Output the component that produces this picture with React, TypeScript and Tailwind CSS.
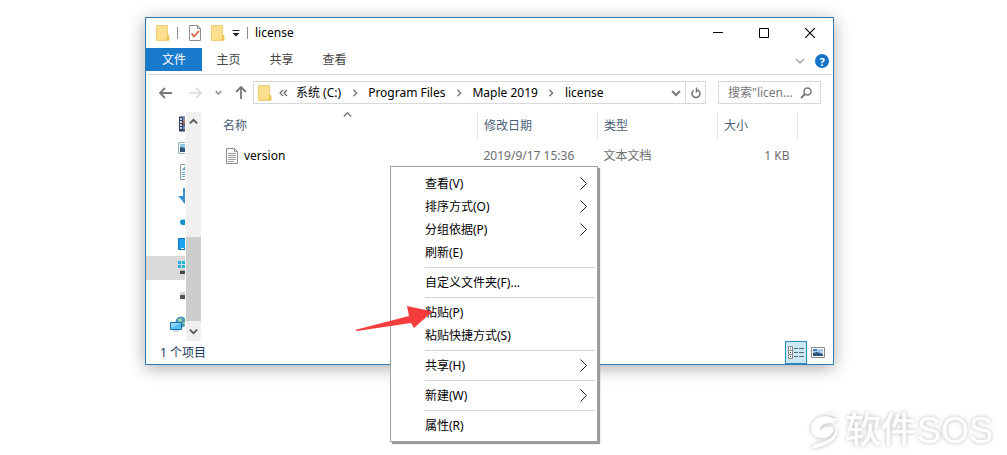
import React from 'react'

interface MenuEntry {
  label: string
  submenu?: boolean
}

const MENU_GROUPS: MenuEntry[][] = [
  [
    { label: '查看(V)', submenu: true },
    { label: '排序方式(O)', submenu: true },
    { label: '分组依据(P)', submenu: true },
    { label: '刷新(E)' },
  ],
  [{ label: '自定义文件夹(F)...' }],
  [{ label: '粘贴(P)' }, { label: '粘贴快捷方式(S)' }],
  [{ label: '共享(H)', submenu: true }],
  [{ label: '新建(W)', submenu: true }],
  [{ label: '属性(R)' }],
]

const PATH_PARTS = ['系统 (C:)', 'Program Files', 'Maple 2019', 'license']

function FolderIcon() {
  return (
    <svg width="14" height="16" viewBox="0 0 14 16" className="shrink-0">
      <path d="M0.5 0.5h11v10h1.5v5H0.5z" fill="#fbdf86" stroke="#efd07a" />
      <path d="M11 10h2v5H8l3-1z" fill="#eec45a" />
      <path d="M2 2h8v11H2z" fill="#fee090" />
    </svg>
  )
}

function Chevron({ dir, color = '#666', size = 8, weight = 1.5 }: { dir: 'up' | 'down' | 'right'; color?: string; size?: number; weight?: number }) {
  const paths = { up: 'M1 6l4-4 4 4', down: 'M1 3l4 4 4-4', right: 'M3 1l4 4-4 4' }
  return (
    <svg width={size} height={size} viewBox="0 0 10 10" className="shrink-0">
      <path d={paths[dir]} fill="none" stroke={color} strokeWidth={weight} />
    </svg>
  )
}

// Navigation pane icons, only their left half shows in the narrow pane
const NAV_ITEMS = [
  {
    name: '视频',
    icon: (
      <>
        <path d="M2 0.5h13v15H2z" fill="#35405c" />
        <path d="M3 2h2v2H3zM3 5h2v2H3zM3 8h2v2H3zM3 11h2v2H3z" fill="#cdd5e2" />
        <path d="M6 1h8v6H6z" fill="#7d90c4" />
        <path d="M6 5h4v3H6z" fill="#c8604a" />
        <path d="M6 9h8v5H6z" fill="#6c84b4" />
      </>
    ),
  },
  {
    name: '图片',
    icon: (
      <>
        <path d="M1.5 2.5h14v11h-14z" fill="#fff" stroke="#9db0bf" />
        <path d="M3 4h11v8H3z" fill="#8fc7ea" />
        <path d="M3 7l5 1 6-1v5H3z" fill="#2d5575" />
      </>
    ),
  },
  {
    name: '文档',
    icon: (
      <>
        <path d="M3.5 0.5h11v15h-11z" fill="#fff" stroke="#929ba3" />
        <path d="M5 6l3-4v4z" fill="#4c9fd4" />
        <path d="M5 8.5h8M5 10.5h8M5 12.5h8" stroke="#5aa4d2" />
      </>
    ),
  },
  { name: '下载', icon: <path d="M6 0h4v7h6l-8 9-7-8h5z" fill="#3a8fd0" /> },
  { name: 'OneDrive', icon: <path d="M6 13a2.500 2.500 0 0 1-0.500-5.500H14V13z" fill="#1790d2" /> },
  {
    name: '此电脑',
    icon: (
      <>
        <path d="M1.5 2.5h14v11h-14z" fill="#1da2f2" stroke="#126fae" />
        <path d="M4 12h3v1H4z" fill="#fff" />
      </>
    ),
  },
  {
    name: '系统 (C:)',
    active: true,
    icon: (
      <>
        <path d="M1 1h3v3H1zM5 1h3v3H5zM1 5h3v3H1zM5 5h3v3H5z" fill="#19b5dc" />
        <path d="M3 10h12v1H3z" fill="#aaa" />
        <path d="M3 11h12v3H3z" fill="#444" />
      </>
    ),
  },
  {
    name: '软件 (D:)',
    icon: (
      <>
        <path d="M4 8h10l1 3H3z" fill="#d2d2d2" />
        <path d="M3 11h12v4H3z" fill="#555" />
      </>
    ),
  },
]

function TextFileIcon() {
  return (
    <svg width="12" height="16" viewBox="0 0 12 16" className="shrink-0">
      <path d="M0.5 0.5h8l3 3v12h-11z" fill="#fff" stroke="#8a8a8a" />
      <path d="M8.5 0.5v3h3M2 5.5h8M2 7.5h8M2 9.5h8M2 11.5h8M2 13.5h6" fill="none" stroke="#9b9b9b" />
    </svg>
  )
}

function TitleBar() {
  return (
    <header className="flex h-[30px] items-center pl-[10px]">
      <FolderIcon />
      <span className="ml-[7px] h-3 w-px bg-[#8c8c8c]" />
      <button aria-label="属性" className="ml-[11px]">
        <svg width="12" height="16" viewBox="0 0 12 16">
          <path d="M0.5 0.5h8l3 3v12h-11z" fill="#fff" stroke="#8e8e8e" />
          <path d="M8.5 0.5v3h3" fill="none" stroke="#8e8e8e" />
          <path d="M2.5 8.5l2.500 3 5-5.500" fill="none" stroke="#d4643f" strokeWidth="1.8" />
        </svg>
      </button>
      <button aria-label="新建文件夹" className="ml-[10px]">
        <FolderIcon />
      </button>
      <button aria-label="自定义快速访问工具栏" className="ml-[7px]">
        <svg width="8" height="8" viewBox="0 0 8 8">
          <path d="M0.5 1h7v1h-7zM0.5 4h7L4 7.5z" fill="#222" />
        </svg>
      </button>
      <span className="ml-[7px] h-3 w-px bg-[#8c8c8c]" />
      <h1 className="ml-[7px] flex-1 text-black">license</h1>
      <button aria-label="最小化" className="flex h-full w-[46px] items-center justify-center">
        <svg width="10" height="10" viewBox="0 0 10 10">
          <path d="M0 4h10v1H0z" fill="#000" />
        </svg>
      </button>
      <button aria-label="最大化" className="flex h-full w-[46px] items-center justify-center">
        <svg width="10" height="10" viewBox="0 0 10 10">
          <path d="M0.5 0.5h9v9h-9z" fill="none" stroke="#000" />
        </svg>
      </button>
      <button aria-label="关闭" className="flex h-full w-[46px] items-center justify-center">
        <svg width="10" height="10" viewBox="0 0 10 10">
          <path d="M0 0l10 10M10 0L0 10" fill="none" stroke="#000" strokeWidth="1.1" />
        </svg>
      </button>
    </header>
  )
}

function RibbonTabs() {
  return (
    <nav className="flex h-[27px] items-start border-b border-[#dadbdc] text-[#444]">
      <button className="h-[23px] w-14 bg-[#1979ca] text-white">文件</button>
      <button className="h-[23px] w-[53px]">主页</button>
      <button className="h-[23px] w-[53px]">共享</button>
      <button className="h-[23px] w-[53px]">查看</button>
      <span className="flex-1" />
      <button aria-label="展开功能区" className="flex h-[26px] items-center">
        <Chevron dir="down" color="#a3a3a3" size={10} />
      </button>
      <button aria-label="帮助" className="mr-1 ml-[10px] flex h-[26px] items-center">
        <span className="flex h-[14px] w-[14px] items-center justify-center rounded-full bg-[#1473c5] text-[11px] leading-none font-bold text-white">
          ?
        </span>
      </button>
    </nav>
  )
}

function AddressRow() {
  return (
    <div className="flex items-center pt-[6px] pr-3 pb-2 pl-[13px]">
      <button aria-label="后退">
        <svg width="13" height="12" viewBox="0 0 13 12">
          <path d="M6 1L1 6l5 5M1 6h12" fill="none" stroke="#777" strokeWidth="1.8" />
        </svg>
      </button>
      <button aria-label="前进" className="ml-[17px]">
        <svg width="13" height="12" viewBox="0 0 13 12">
          <path d="M7 1l5 5-5 5M12 6H0" fill="none" stroke="#d8d8d8" strokeWidth="1.6" />
        </svg>
      </button>
      <button aria-label="最近浏览的位置" className="ml-[13px]">
        <Chevron dir="down" color="#888" size={7} weight={2} />
      </button>
      <button aria-label="上移" className="ml-[13px]">
        <svg width="12" height="13" viewBox="0 0 12 13">
          <path d="M1 6l5-5 5 5M6 1v12" fill="none" stroke="#777" strokeWidth="1.8" />
        </svg>
      </button>
      <div className="ml-[6px] flex h-[23px] min-w-0 flex-1 items-center border border-[#d9d9d9] pl-1 text-black">
        <FolderIcon />
        <svg width="9" height="8" viewBox="0 0 9 8" className="mr-2 ml-[7px] shrink-0">
          <path d="M4 1L1 4l3 3M8 1L5 4l3 3" fill="none" stroke="#666" strokeWidth="1.2" />
        </svg>
        {PATH_PARTS.map((part, i) => (
          <React.Fragment key={part}>
            {i > 0 && (
              <span className="flex w-[27px] shrink-0 justify-center">
                <Chevron dir="right" color="#777" weight={1.8} />
              </span>
            )}
            <a href="#" className="whitespace-nowrap">
              {part}
            </a>
          </React.Fragment>
        ))}
        <span className="flex-1" />
        <button aria-label="以前的位置" className="flex h-full w-[14px] items-center">
          <Chevron dir="down" color="#777" size={10} weight={2} />
        </button>
        <button aria-label="刷新" className="flex h-full w-5 items-center justify-center border-l border-[#d9d9d9]">
          <svg width="10" height="12" viewBox="0 0 10 12" className="shrink-0">
            <path d="M2.500 3.500A4 4 0 1 0 7.500 3.500H5" fill="none" stroke="#707070" strokeWidth="1.5" />
            <path d="M5.500 0.500v5" fill="none" stroke="#707070" strokeWidth="1.5" />
          </svg>
        </button>
      </div>
      <label className="ml-3 flex h-[23px] w-[103px] items-center border border-[#d9d9d9] pr-2 pl-[9px]">
        <input
          type="text"
          aria-label="搜索"
          placeholder={'搜索"licen...'}
          className="w-0 min-w-0 flex-1 bg-transparent outline-none placeholder:text-[#757575]"
        />
        <svg width="12" height="12" viewBox="0 0 12 12" className="shrink-0">
          <circle cx="7.500" cy="4.500" r="3.500" fill="none" stroke="#777" strokeWidth="1.5" />
          <path d="M5 7L1 11" stroke="#777" strokeWidth="2" />
        </svg>
      </label>
    </div>
  )
}

function NavPane() {
  return (
    <div className="flex shrink-0">
      <ul className="w-[39px] overflow-hidden pb-[5px]">
        {NAV_ITEMS.map((item) => (
          <li key={item.name} className={item.active ? 'bg-[#d9d9d9]' : ''}>
            <a href="#" aria-label={item.name} className="flex h-6 items-center pl-[31px]">
              <svg width="16" height="16" viewBox="0 0 16 16" className="shrink-0">
                {item.icon}
              </svg>
            </a>
          </li>
        ))}
        <li className="mt-2">
          <a href="#" aria-label="网络" className="flex h-6 items-center pl-6">
            <svg width="16" height="16" viewBox="0 0 16 16" className="shrink-0">
              <circle cx="11" cy="6" r="5.500" fill="#4b97bd" />
              <path d="M8 3l3-1 1 3-3 2zM12 7l3-1v3z" fill="#a9d4a4" />
              <path d="M0.5 6.500h11v7h-11z" fill="#55bdf3" stroke="#1d6ea6" />
              <path d="M1 7h10L1 12z" fill="#8dd6fb" />
              <path d="M3 15h6" stroke="#8ab8d2" />
            </svg>
          </a>
        </li>
      </ul>
      <div className="ml-px flex w-[15px] flex-col bg-[#f0f0f0]">
        <button aria-label="向上滚动" className="flex h-5 items-center justify-center">
          <Chevron dir="up" color="#555" size={9} weight={2} />
        </button>
        <div className="flex flex-1 flex-col justify-end">
          <div className="h-[84px] bg-[#cdcdcd]" />
        </div>
        <button aria-label="向下滚动" className="flex h-5 items-center justify-center">
          <Chevron dir="down" color="#555" size={9} weight={2} />
        </button>
      </div>
    </div>
  )
}

function FileTable() {
  return (
    <div className="min-w-0 flex-1 pr-[35px]">
      <table className="w-full table-fixed text-left text-[#6d6d6d]">
        <thead className="text-[#4c607a]">
          <tr className="h-[27px]">
            <th className="relative border-r border-[#e5e5e5] pl-[22px] font-normal">
              名称
              <span className="absolute -top-px left-[142px]">
                <Chevron dir="up" color="#777" size={9} />
              </span>
            </th>
            <th className="w-[120px] border-r border-[#e5e5e5] pl-[6px] font-normal">修改日期</th>
            <th className="w-[120px] border-r border-[#e5e5e5] pl-[6px] font-normal">类型</th>
            <th className="w-20 border-r border-[#e5e5e5] pl-[6px] font-normal">大小</th>
          </tr>
        </thead>
        <tbody>
          <tr className="h-[33px]">
            <td className="pl-[25px] text-black">
              <span className="flex items-center gap-[6px]">
                <TextFileIcon />
                version
              </span>
            </td>
            <td className="pl-[6px] whitespace-nowrap">2019/9/17 15:36</td>
            <td className="pl-[6px]">文本文档</td>
            <td className="pr-2 text-right">1 KB</td>
          </tr>
        </tbody>
      </table>
    </div>
  )
}

function StatusBar() {
  return (
    <footer className="flex h-[23px] items-center pr-2 pl-[14px] text-[#1e395b]">
      <span className="flex-1">1 个项目</span>
      <button aria-label="详细信息" className="flex h-full w-[22px] items-center justify-center border border-[#2a8dbf] bg-[#cbe8f6]">
        <svg width="16" height="13" viewBox="0 0 16 13" className="shrink-0">
          <path d="M0.5 0.5h4v12h-4zM0.5 4.500h4M0.5 8.500h4" fill="#fff" stroke="#8a8a8a" />
          <path d="M2 2h1v1H2zM2 6h1v1H2zM2 10h1v1H2z" fill="#555" />
          <path d="M6 2.500h4M11 2.500h5M6 6.500h4M11 6.500h5M6 10.500h4M11 10.500h5" stroke="#5a6a74" />
        </svg>
      </button>
      <button aria-label="大图标" className="ml-1">
        <svg width="14" height="11" viewBox="0 0 14 11">
          <path d="M0.500 0.500h13v10h-13z" fill="#fff" stroke="#8a8a8a" />
          <path d="M2 2h10v7H2z" fill="#a9cdf0" />
          <path d="M2 6l4-1 6 2v2H2z" fill="#2f5578" />
          <path d="M2 2h4v2H2z" fill="#4d7fc9" />
        </svg>
      </button>
    </footer>
  )
}

function ContextMenu() {
  return (
    <div
      role="menu"
      className="absolute top-[148px] left-[244px] w-[208px] border border-[#a0a0a0] bg-white pt-[5px] pr-[2px] pb-1 pl-[34px] text-black shadow-[2px_2px_1px_#999999]"
    >
      {MENU_GROUPS.map((group, gIdx) => (
        <React.Fragment key={gIdx}>
          {gIdx > 0 && <hr className="my-[3px] border-t border-[#d4d4d4]" />}
          {group.map((entry) => (
            <button
              key={entry.label}
              role="menuitem"
              className="flex h-[23px] w-full items-center justify-between pr-2 text-left"
            >
              {entry.label}
              {entry.submenu && (
                <svg width="7" height="13" viewBox="0 0 7 13">
                  <path d="M0.500 0.500l6 6-6 6" fill="none" stroke="#222" />
                </svg>
              )}
            </button>
          ))}
        </React.Fragment>
      ))}
    </div>
  )
}

function Watermark() {
  return (
    <div className="absolute right-[14px] bottom-1 flex items-center gap-[6px] font-['Liberation_Sans','Noto_Sans_CJK_SC',sans-serif] text-4xl font-medium text-white drop-shadow-[0_0_2px_#00000048]">
      <svg width="30" height="38" viewBox="0 0 30 38">
        <path
          d="M23 6C13 1 2 8 2 16c0 7 6 10 11 10 8 0 12-5 11-10-3-3-10-1-13 2-1-5 8-9 15-6 0-3-1-5-3-6z"
          fill="#fff"
        />
        <path d="M28 14c3 11-6 20-27 23 2-3 5-5 9-6 10-2 17-7 18-17z" fill="#fff" />
        <path d="M20 1l2 2M24 1l1 3M25 7l3 1" stroke="#fff" strokeWidth="2" />
      </svg>
      <span>软件SOS</span>
    </div>
  )
}

export default function App() {
  return (
    <div className="relative min-h-screen overflow-hidden bg-white pt-[17px] font-['Noto_Sans','Noto_Sans_CJK_SC',sans-serif] text-xs">
      <main className="relative mr-[173px] ml-[145px] border border-[#2f7cb5] bg-white shadow-[0_3px_16px_#00000055]">
        <TitleBar />
        <RibbonTabs />
        <AddressRow />
        <div className="flex">
          <NavPane />
          <FileTable />
        </div>
        <StatusBar />
        <ContextMenu />
        {/* Pointer to the paste command */}
        <svg width="78" height="26" viewBox="0 0 78 26" className="absolute top-[288px] left-[209px]">
          <path d="M0 24L54 10 52 0l25.500 5.500L59 22l-3-5L2 25z" fill="#f53d3d" />
        </svg>
      </main>
      <Watermark />
    </div>
  )
}
